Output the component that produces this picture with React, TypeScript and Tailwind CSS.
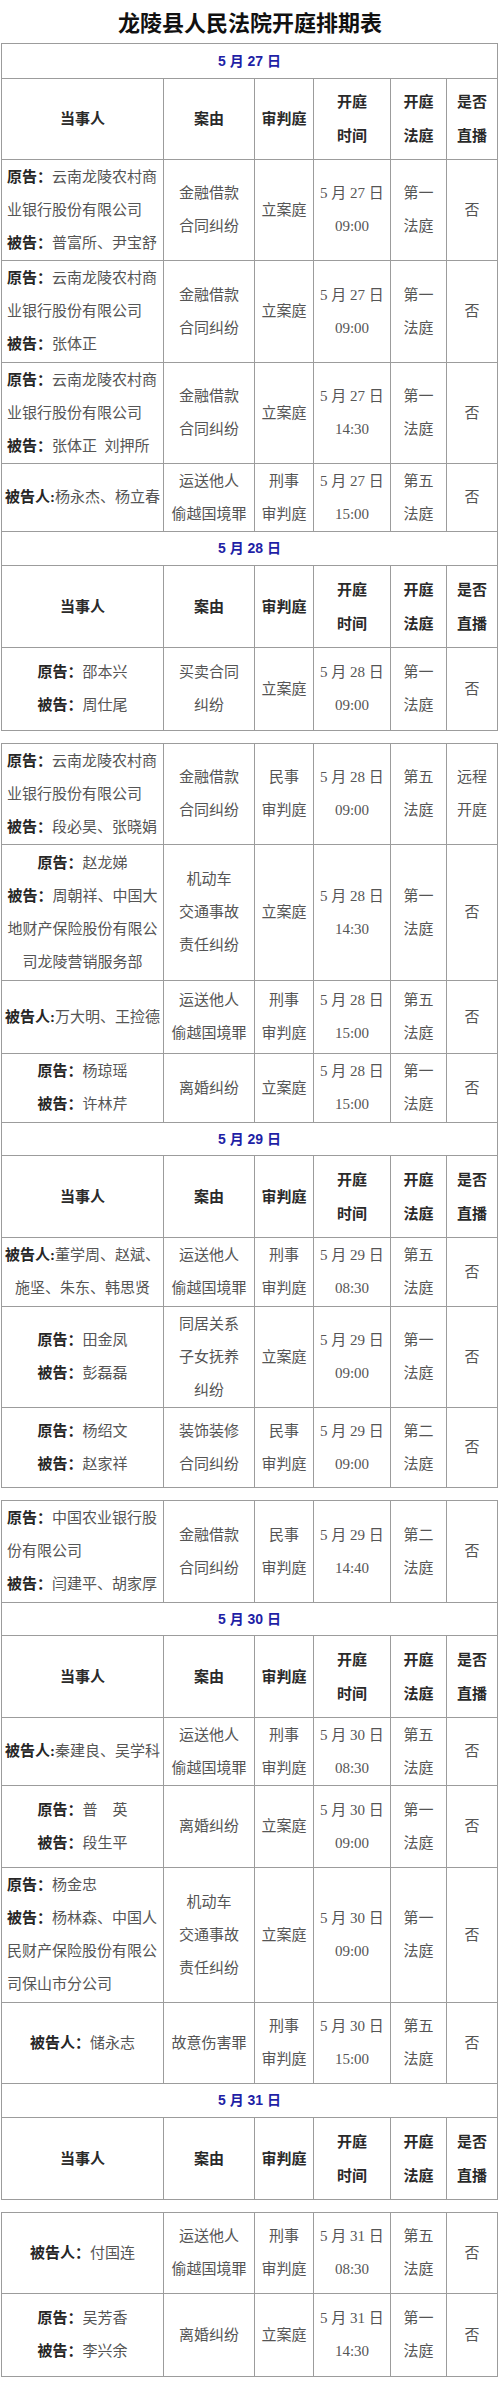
import React from "react";

type Line = [string, string];

interface Case {
  h: string;
  align: "left" | "center";
  party: Line[];
  cause: string[];
  court: string[];
  time: string[];
  room: string[];
  live: string[];
}

type Block =
  | { kind: "date"; h: string; text: string }
  | { kind: "head"; h: string }
  | ({ kind: "case" } & Case);

const cols = "grid grid-cols-[162px_91px_59px_77px_56px_51px]";
const cell = "border-r border-b border-[#9c9c9c] flex flex-col justify-center items-center";
const serif = "font-['Liberation_Serif','Noto_Sans_CJK_SC',serif]";
const sans = "font-['Liberation_Sans','Noto_Sans_CJK_SC',sans-serif]";

const loan = ["金融借款", "合同纠纷"];
const smuggle = ["运送他人", "偷越国境罪"];
const criminal = ["刑事", "审判庭"];
const civil = ["民事", "审判庭"];
const traffic = ["机动车", "交通事故", "责任纠纷"];

const tables: Block[][] = [
  [
    { kind: "date", h: "h-[35px]", text: "5 月 27 日" },
    { kind: "head", h: "h-[81px]" },
    {
      kind: "case", h: "h-[101px]", align: "left",
      party: [["原告：", "云南龙陵农村商"], ["", "业银行股份有限公司"], ["被告：", "普富所、尹宝舒"]],
      cause: loan, court: ["立案庭"], time: ["5 月 27 日", "09:00"], room: ["第一", "法庭"], live: ["否"],
    },
    {
      kind: "case", h: "h-[102px]", align: "left",
      party: [["原告：", "云南龙陵农村商"], ["", "业银行股份有限公司"], ["被告：", "张体正"]],
      cause: loan, court: ["立案庭"], time: ["5 月 27 日", "09:00"], room: ["第一", "法庭"], live: ["否"],
    },
    {
      kind: "case", h: "h-[101px]", align: "left",
      party: [["原告：", "云南龙陵农村商"], ["", "业银行股份有限公司"], ["被告：", "张体正  刘押所"]],
      cause: loan, court: ["立案庭"], time: ["5 月 27 日", "14:30"], room: ["第一", "法庭"], live: ["否"],
    },
    {
      kind: "case", h: "h-[68px]", align: "center",
      party: [["被告人:", "杨永杰、杨立春"]],
      cause: smuggle, court: criminal, time: ["5 月 27 日", "15:00"], room: ["第五", "法庭"], live: ["否"],
    },
    { kind: "date", h: "h-[34px]", text: "5 月 28 日" },
    { kind: "head", h: "h-[82px]" },
    {
      kind: "case", h: "h-[83px]", align: "center",
      party: [["原告：", "邵本兴"], ["被告：", "周仕尾"]],
      cause: ["买卖合同", "纠纷"], court: ["立案庭"], time: ["5 月 28 日", "09:00"], room: ["第一", "法庭"], live: ["否"],
    },
  ],
  [
    {
      kind: "case", h: "h-[101px]", align: "left",
      party: [["原告：", "云南龙陵农村商"], ["", "业银行股份有限公司"], ["被告：", "段必昊、张晓娟"]],
      cause: loan, court: civil, time: ["5 月 28 日", "09:00"], room: ["第五", "法庭"], live: ["远程", "开庭"],
    },
    {
      kind: "case", h: "h-[136px]", align: "center",
      party: [["原告：", "赵龙娣"], ["被告：", "周朝祥、中国大"], ["", "地财产保险股份有限公"], ["", "司龙陵营销服务部"]],
      cause: traffic, court: ["立案庭"], time: ["5 月 28 日", "14:30"], room: ["第一", "法庭"], live: ["否"],
    },
    {
      kind: "case", h: "h-[73px]", align: "center",
      party: [["被告人:", "万大明、王捡德"]],
      cause: smuggle, court: criminal, time: ["5 月 28 日", "15:00"], room: ["第五", "法庭"], live: ["否"],
    },
    {
      kind: "case", h: "h-[69px]", align: "center",
      party: [["原告：", "杨琼瑶"], ["被告：", "许林芹"]],
      cause: ["离婚纠纷"], court: ["立案庭"], time: ["5 月 28 日", "15:00"], room: ["第一", "法庭"], live: ["否"],
    },
    { kind: "date", h: "h-[33px]", text: "5 月 29 日" },
    { kind: "head", h: "h-[82px]" },
    {
      kind: "case", h: "h-[69px]", align: "center",
      party: [["被告人:", "董学周、赵斌、"], ["", "施坚、朱东、韩思贤"]],
      cause: smuggle, court: criminal, time: ["5 月 29 日", "08:30"], room: ["第五", "法庭"], live: ["否"],
    },
    {
      kind: "case", h: "h-[101px]", align: "center",
      party: [["原告：", "田金凤"], ["被告：", "彭磊磊"]],
      cause: ["同居关系", "子女抚养", "纠纷"], court: ["立案庭"], time: ["5 月 29 日", "09:00"], room: ["第一", "法庭"], live: ["否"],
    },
    {
      kind: "case", h: "h-[80px]", align: "center",
      party: [["原告：", "杨绍文"], ["被告：", "赵家祥"]],
      cause: ["装饰装修", "合同纠纷"], court: civil, time: ["5 月 29 日", "09:00"], room: ["第二", "法庭"], live: ["否"],
    },
  ],
  [
    {
      kind: "case", h: "h-[102px]", align: "left",
      party: [["原告：", "中国农业银行股"], ["", "份有限公司"], ["被告：", "闫建平、胡家厚"]],
      cause: loan, court: civil, time: ["5 月 29 日", "14:40"], room: ["第二", "法庭"], live: ["否"],
    },
    { kind: "date", h: "h-[33px]", text: "5 月 30 日" },
    { kind: "head", h: "h-[82px]" },
    {
      kind: "case", h: "h-[68px]", align: "center",
      party: [["被告人:", "秦建良、吴学科"]],
      cause: smuggle, court: criminal, time: ["5 月 30 日", "08:30"], room: ["第五", "法庭"], live: ["否"],
    },
    {
      kind: "case", h: "h-[82px]", align: "center",
      party: [["原告：", "普　英"], ["被告：", "段生平"]],
      cause: ["离婚纠纷"], court: ["立案庭"], time: ["5 月 30 日", "09:00"], room: ["第一", "法庭"], live: ["否"],
    },
    {
      kind: "case", h: "h-[135px]", align: "left",
      party: [["原告：", "杨金忠"], ["被告：", "杨林森、中国人"], ["", "民财产保险股份有限公"], ["", "司保山市分公司"]],
      cause: traffic, court: ["立案庭"], time: ["5 月 30 日", "09:00"], room: ["第一", "法庭"], live: ["否"],
    },
    {
      kind: "case", h: "h-[81px]", align: "center",
      party: [["被告人：", "储永志"]],
      cause: ["故意伤害罪"], court: criminal, time: ["5 月 30 日", "15:00"], room: ["第五", "法庭"], live: ["否"],
    },
    { kind: "date", h: "h-[34px]", text: "5 月 31 日" },
    { kind: "head", h: "h-[82px]" },
  ],
  [
    {
      kind: "case", h: "h-[81px]", align: "center",
      party: [["被告人：", "付国连"]],
      cause: smuggle, court: criminal, time: ["5 月 31 日", "08:30"], room: ["第五", "法庭"], live: ["否"],
    },
    {
      kind: "case", h: "h-[83px]", align: "center",
      party: [["原告：", "吴芳香"], ["被告：", "李兴余"]],
      cause: ["离婚纠纷"], court: ["立案庭"], time: ["5 月 31 日", "14:30"], room: ["第一", "法庭"], live: ["否"],
    },
  ],
];

function Lines({ items }: { items: string[] }) {
  return (
    <>
      {items.map((t, i) => (
        <div key={i} className="whitespace-nowrap">{t}</div>
      ))}
    </>
  );
}

function Header({ h }: { h: string }) {
  const heads = [["当事人"], ["案由"], ["审判庭"], ["开庭", "时间"], ["开庭", "法庭"], ["是否", "直播"]];
  return (
    <div className={`${cols} ${h} ${sans} text-[15px] leading-[34px] font-bold text-[#2a2a2a]`}>
      {heads.map((lines, i) => (
        <div key={i} className={cell}>
          <Lines items={lines} />
        </div>
      ))}
    </div>
  );
}

function CaseRow({ c }: { c: Case }) {
  return (
    <div className={`${cols} ${c.h} ${serif} text-[15px] leading-[33px] text-[#555]`}>
      <div className={`${cell} px-[5px] ${c.align === "left" ? "!items-start" : ""}`}>
        {c.party.map(([label, text], i) => (
          <div key={i} className="whitespace-pre">
            {label && <span className="font-bold text-[#262626]">{label}</span>}
            {text}
          </div>
        ))}
      </div>
      <div className={cell}><Lines items={c.cause} /></div>
      <div className={cell}><Lines items={c.court} /></div>
      <div className={cell}><Lines items={c.time} /></div>
      <div className={cell}><Lines items={c.room} /></div>
      <div className={cell}><Lines items={c.live} /></div>
    </div>
  );
}

export default function App() {
  return (
    <div className="w-[500px] min-h-[2382px] bg-white">
      <div className="h-[43px] flex items-center justify-center font-['Noto_Sans_CJK_SC',serif] text-[22px] font-bold text-[#111] tracking-[0px]">
        龙陵县人民法院开庭排期表
      </div>
      {tables.map((blocks, ti) => (
        <div key={ti} className={`ml-[1px] w-[497px] border-l border-t border-[#9c9c9c] ${ti > 0 ? "mt-[12px]" : ""}`}>
          {blocks.map((b, i) => {
            if (b.kind === "date")
              return (
                <div key={i} className={`${b.h} border-r border-b border-[#9c9c9c] flex items-center justify-center ${sans} text-[14px] font-bold text-[#1f1fa6]`}>
                  {b.text}
                </div>
              );
            if (b.kind === "head") return <Header key={i} h={b.h} />;
            return <CaseRow key={i} c={b} />;
          })}
        </div>
      ))}
    </div>
  );
}
